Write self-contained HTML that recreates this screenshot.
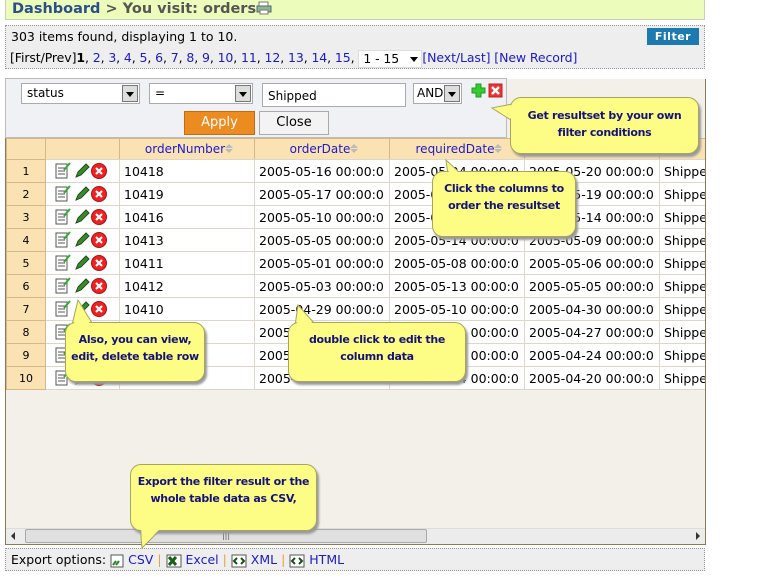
<!DOCTYPE html>
<html><head><meta charset="utf-8"><style>
*{box-sizing:border-box;margin:0;padding:0}
body{width:777px;height:580px;background:#fff;font-family:"DejaVu Sans","Liberation Sans",sans-serif;font-size:12px;position:relative;overflow:hidden;color:#000}
.abs{position:absolute}
a{color:#1a1acc;text-decoration:none}
#top{left:5px;top:-1px;width:700px;height:21px;background:#ebfcbb;border:1px solid #c8d0b8;font-weight:bold;font-size:14.5px;padding:1px 0 0 6px;color:#555}
#info{left:5px;top:25px;width:700px;height:44px;background:#eee;border:1px dotted #999}
#grid{left:5px;top:79px;width:701px;height:466px;border:1px solid #8a7a5a;background:#f3f0ea;border-top:none}
#fp{left:5px;top:78px;width:502px;height:60px;background:#f0f1f4;border:1px solid #bbb}
.sel{position:absolute;height:21px;background:#fff;border:1px solid #aaa;font-size:12px;padding:2px 0 0 5px}
.sel i{position:absolute;right:1px;top:1px;width:16px;height:17px;background:#ddd;border:1px solid #777}
.sel i:after{content:"";position:absolute;left:3px;top:6px;border:4px solid transparent;border-top:5px solid #000}
.clip{position:absolute;left:6px;width:699px;overflow:hidden}
table{border-collapse:collapse;table-layout:fixed;width:700px}
td{height:23px;border:1px solid #ddd6cc;background:#fff;font-size:12.5px;white-space:nowrap;overflow:hidden;padding:0 0 0 4px}
td.n{background:#fbe2b2;border-color:#d4b88a;text-align:center;font-size:11px;padding:0}
tr.h td{background:#fbe2b2;border-color:#d4b88a;text-align:center;color:#1a1acc;height:21px;font-size:12px}
.ar{display:inline-block;width:8px;height:10px;vertical-align:-1px;position:relative}
.ar:before{content:"";position:absolute;left:0;top:0;border:4px solid transparent;border-bottom:4px solid #bbb;border-top:none}
.ar:after{content:"";position:absolute;left:0;top:5px;border:4px solid transparent;border-top:4px solid #bbb;border-bottom:none}
.ic{display:inline-block;vertical-align:middle}
.tip{position:absolute;background:#fdfc84;border:1px solid #a8a460;border-radius:11px;box-shadow:2px 3px 2px #999;color:#13137a;font-weight:bold;font-size:11px;text-align:center;line-height:17px;white-space:nowrap;letter-spacing:-.3px}
</style></head><body>
<div id="top" class="abs"><span style="color:#2c4e8c">Dashboard</span> &gt; You visit: orders<svg class="ic" width="16" height="14" viewBox="0 0 16 14" style="vertical-align:-2px"><rect x="3" y="1" width="9" height="5" fill="#fff" stroke="#777"/><rect x="1" y="5" width="14" height="6" fill="#8cb88c" stroke="#567"/><rect x="4" y="9" width="8" height="4" fill="#fff" stroke="#777"/></svg></div>

<div id="info" class="abs">
<div class="abs" style="left:5px;top:3px;font-size:12.5px">303 items found, displaying 1 to 10.</div>
<div class="abs" style="left:641px;top:2px;width:52px;height:17px;background:#1d7ab0;color:#fff;font-weight:bold;font-size:11px;text-align:center;line-height:17px;letter-spacing:.5px">Filter</div>
<div class="abs" style="left:4px;top:24px;font-size:12.5px;white-space:nowrap;letter-spacing:-.1px">[First/Prev]<b>1</b>, <a>2</a>, <a>3</a>, <a>4</a>, <a>5</a>, <a>6</a>, <a>7</a>, <a>8</a>, <a>9</a>, <a>10</a>, <a>11</a>, <a>12</a>, <a>13</a>, <a>14</a>, <a>15</a>, <span style="display:inline-block;width:64px;height:18px;background:#fff;border:1px solid #ddd;padding-left:4px;position:relative;vertical-align:-1px">1 - 15<span style="position:absolute;right:3px;top:6px;border:4px solid transparent;border-top:5px solid #000"></span></span><a>[Next/Last]</a> <a>[New Record]</a></div>
</div>

<div id="grid" class="abs"></div>
<div id="fp" class="abs">
<div class="sel" style="left:15px;top:4px;width:119px">status<i></i></div>
<div class="sel" style="left:143px;top:4px;width:104px">=<i></i></div>
<div class="sel" style="left:256px;top:4px;width:144px;height:24px;padding-top:5px">Shipped</div>
<div class="sel" style="left:407px;top:4px;width:49px;padding-left:3px">AND<i></i></div>
<svg class="abs" style="left:465px;top:4px" width="32" height="16"><path d="M5 1h5v4h4v5h-4v4H5v-4H1V5h4z" fill="#3c3" stroke="#292"/><rect x="18" y="1" width="13" height="13" fill="#e33" stroke="#b22"/><path d="M21 4l7 7M28 4l-7 7" stroke="#fff" stroke-width="2.5"/></svg>
<div class="abs" style="left:178px;top:32px;width:71px;height:24px;background:#ec8c20;border:1px solid #c96a10;color:#fff;font-size:13px;text-align:center;line-height:22px">Apply</div>
<div class="abs" style="left:253px;top:32px;width:70px;height:24px;background:#f3f3f3;border:1px solid #aaa;font-size:13px;text-align:center;line-height:22px">Close</div>
</div>

<div class="clip" style="top:138px">
<table>
<colgroup><col style="width:39px"><col style="width:74px"><col style="width:135px"><col style="width:135px"><col style="width:135px"><col style="width:135px"><col style="width:47px"></colgroup>
<tr class="h"><td class="n"></td><td></td><td>orderNumber<span class="ar"></span></td><td>orderDate<span class="ar"></span></td><td>requiredDate<span class="ar"></span></td><td></td><td></td></tr>
</table></div>
<div id="rows" class="clip" style="top:159px"></div>
<script>
var d=[["10418","2005-05-16","2005-05-24","2005-05-20"],["10419","2005-05-17","2005-05-19","2005-05-19"],["10416","2005-05-10","2005-05-16","2005-05-14"],["10413","2005-05-05","2005-05-14","2005-05-09"],["10411","2005-05-01","2005-05-08","2005-05-06"],["10412","2005-05-03","2005-05-13","2005-05-05"],["10410","2005-04-29","2005-05-10","2005-04-30"],["10408","2005-04-22","2005-04-29","2005-04-27"],["10407","2005-04-22","2005-05-05","2005-04-24"],["10406","2005-04-15","2005-04-24","2005-04-20"]];
var ic='<svg class="ic" width="56" height="18" viewBox="0 0 56 18"><rect x="2" y="2" width="11" height="14" fill="#fff" stroke="#555"/><path d="M4 6h7M4 9h7M4 12h7" stroke="#555"/><path d="M10 8l6-7" stroke="#3a3" stroke-width="2"/><path d="M22 15l2-5 8-8 3 3-8 8z" fill="#3a8a2a" stroke="#1d4d1d"/><circle cx="45" cy="9" r="7.5" fill="#e22" stroke="#a11"/><path d="M42 6l6 6M48 6l-6 6" stroke="#fff" stroke-width="2.2"/></svg>';
var h='<table><colgroup><col style="width:39px"><col style="width:74px"><col style="width:135px"><col style="width:135px"><col style="width:135px"><col style="width:135px"><col style="width:47px"></colgroup>';
d.forEach(function(r,i){h+='<tr><td class="n">'+(i+1)+'</td><td style="padding-left:8px">'+ic+'</td><td>'+r[0]+'</td><td>'+r[1]+' 00:00:0</td><td>'+r[2]+' 00:00:0</td><td>'+r[3]+' 00:00:0</td><td>Shipped</td></tr>'});
document.getElementById('rows').innerHTML=h+'</table>';
</script>

<div class="abs" style="left:6px;top:528px;width:699px;height:16px;background:#ececec;border-top:1px solid #ddd"></div>
<div class="abs" style="left:25px;top:529px;width:402px;height:14px;background:#e0e0e0;border:1px solid #aaa;border-radius:2px;text-align:center;font-size:8px;line-height:12px;color:#555">|||</div>
<div class="abs" style="left:11px;top:532px;border:4px solid transparent;border-right:4px solid #333;border-left:none"></div>
<div class="abs" style="left:696px;top:532px;border:4px solid transparent;border-left:4px solid #333;border-right:none"></div>

<div class="abs" style="left:5px;top:548px;width:700px;height:23px;background:#eee;border:1px dotted #999;padding:3px 0 0 5px;font-size:12.5px;white-space:nowrap">Export options: <svg class="ic" width="14" height="14"><rect x="1" y="1" width="12" height="12" fill="#fff" stroke="#555"/><path d="M3 11l3-4M6 11l3-4" stroke="#282" stroke-width="2"/></svg> <a>CSV</a> <span style="color:#e9a040">|</span> <svg class="ic" width="16" height="14"><rect x="1" y="1" width="14" height="12" fill="#fff" stroke="#555"/><path d="M3 3l7 8M10 3l-7 8" stroke="#186018" stroke-width="3"/></svg> <a>Excel</a> <span style="color:#e9a040">|</span> <svg class="ic" width="16" height="14"><rect x="1" y="1" width="14" height="12" fill="#fff" stroke="#555"/><path d="M6 4l-3 3 3 3M10 4l3 3-3 3" stroke="#185018" stroke-width="2" fill="none"/></svg> <a>XML</a> <span style="color:#e9a040">|</span> <svg class="ic" width="16" height="14"><rect x="1" y="1" width="14" height="12" fill="#fff" stroke="#555"/><path d="M6 4l-3 3 3 3M10 4l3 3-3 3" stroke="#185018" stroke-width="2" fill="none"/></svg> <a>HTML</a></div>

<svg class="abs" style="left:0;top:0" width="777" height="580">
<g fill="#fdfc84" stroke="#a8a460">
<path d="M512 104L492 108L514 122"/>
<path d="M446 160L460 173L448 175Z"/>
<path d="M78 300L92 323L72 325Z"/>
<path d="M298 305L315 324L295 326Z"/>
<path d="M142 548L162 528L140 525Z"/>
</g></svg>
<div class="tip" style="left:510px;top:97px;width:189px;height:57px;padding-top:9px">Get resultset by your own<br>filter conditions</div>
<div class="tip" style="left:432px;top:171px;width:144px;height:66px;padding-top:8px">Click the columns to<br>order the resultset</div>
<div class="tip" style="left:65px;top:322px;width:140px;height:60px;padding-top:8px">Also, you can view,<br>edit, delete table row</div>
<div class="tip" style="left:288px;top:322px;width:178px;height:60px;padding-top:8px">double click to edit the<br>column data</div>
<div class="tip" style="left:130px;top:464px;width:187px;height:67px;padding-top:8px">Export the filter result or the<br>whole table data as CSV,</div>
<svg class="abs" style="left:0;top:0" width="777" height="580">
<g fill="#fdfc84"><path d="M512 105L494 108L513 120"/><path d="M447 162L458 172L449 173Z"/><path d="M79 303L90 324L74 324Z"/><path d="M299 308L313 324L297 324Z"/><path d="M143 545L160 529L141 529Z"/></g></svg>
</body></html>
